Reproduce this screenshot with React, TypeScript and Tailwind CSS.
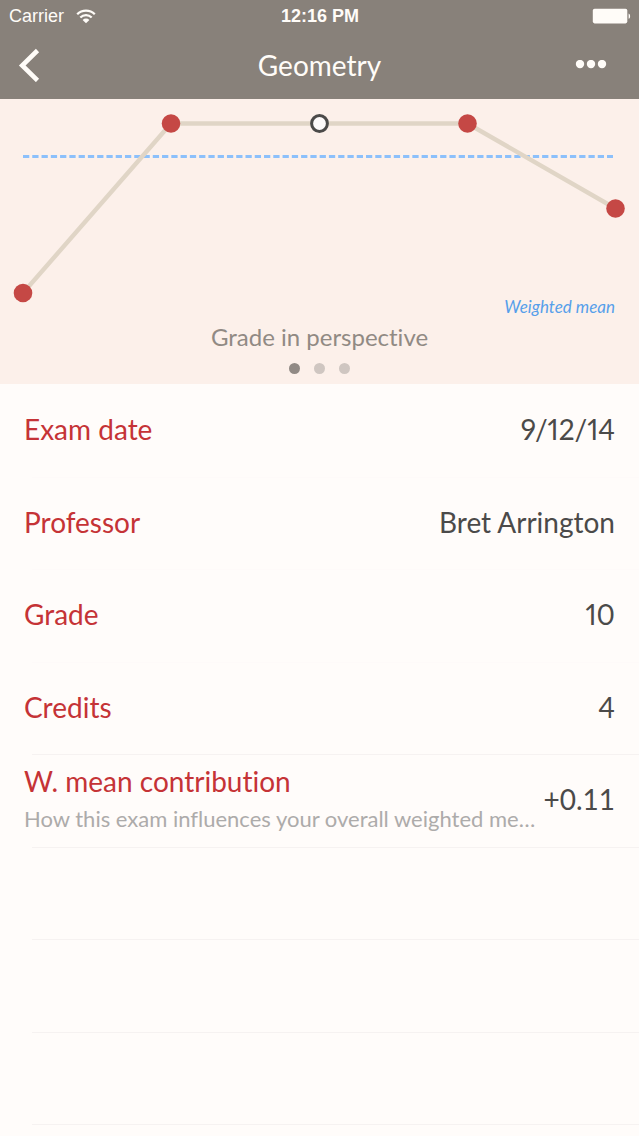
import { useState } from 'react'
import type { ReactNode } from 'react'
import { clsx } from 'clsx'

type Point = { x: number; y: number; current?: boolean }

const POINTS: Point[] = [
  { x: 23, y: 194 },
  { x: 171, y: 24.5 },
  { x: 319.5, y: 24.5, current: true },
  { x: 467.5, y: 24.5 },
  { x: 615.5, y: 109.5 },
]
const MEAN_Y = 57.5

const PAGES = ['Grade in perspective', 'Grade distribution', 'Grade trend']

const DETAILS = [
  { label: 'Exam date', value: '9/12/14' },
  { label: 'Professor', value: 'Bret Arrington' },
  { label: 'Grade', value: '10' },
  { label: 'Credits', value: '4' },
]

function StatusBar() {
  return (
    <div className="grid h-8 grid-cols-3 items-center pr-2 pl-[9px] font-['Liberation_Sans',sans-serif] text-lg leading-8">
      <div className="flex items-center gap-3">
        <span>Carrier</span>
        <svg width="20" height="15" viewBox="0 0 20 15" fill="none">
          <path d="M1.2 5.2a12.6 12.6 0 0 1 17.6 0" stroke="currentColor" strokeWidth="2.3" />
          <path d="M4.3 8.5a8.2 8.2 0 0 1 11.4 0" stroke="currentColor" strokeWidth="2.3" />
          <path d="M6.6 10.9a4.9 4.9 0 0 1 6.8 0L10 14.2z" fill="currentColor" />
        </svg>
      </div>
      <span className="text-center font-bold">12:16 PM</span>
      <svg className="justify-self-end" width="39" height="16" viewBox="0 0 39 16" fill="currentColor">
        <rect x="0.8" y="0.8" width="34.5" height="14.6" rx="1.8" />
        <path d="M36.6 5.4c2 .6 2 4.8 0 5.4z" />
      </svg>
    </div>
  )
}

function NavBar() {
  return (
    <div className="flex h-[67px] items-center justify-between pr-8 pb-0.5 pl-4">
      <button type="button" aria-label="Back" className="flex w-16 cursor-pointer">
        <svg width="24" height="34" viewBox="0 0 24 34" fill="none">
          <path d="M21.5 2.5L6.2 17.5l15.3 15" stroke="currentColor" strokeWidth="4.6" />
        </svg>
      </button>
      <h1 className="text-[28px] leading-9">Geometry</h1>
      <button type="button" aria-label="More" className="flex w-12 cursor-pointer justify-end">
        <svg width="32" height="10" viewBox="0 0 32 10" fill="currentColor">
          <circle cx="5" cy="4" r="4.2" />
          <circle cx="16" cy="4" r="4.2" />
          <circle cx="27" cy="4" r="4.2" />
        </svg>
      </button>
    </div>
  )
}

function GradeChart() {
  return (
    <svg className="h-auto w-full" viewBox="0 0 639 204" fill="none" role="img" aria-label="Grades">
      <line
        x1="23"
        x2="613"
        y1={MEAN_Y}
        y2={MEAN_Y}
        stroke="#8cc0fb"
        strokeWidth="3"
        strokeDasharray="6.27 3"
      />
      <polyline
        points={POINTS.map((p) => `${p.x},${p.y}`).join(' ')}
        stroke="#e0d5c6"
        strokeWidth="4.4"
      />
      {POINTS.map((p) =>
        p.current ? (
          <circle key={p.x} cx={p.x} cy={p.y} r="7.9" fill="#fdfafa" stroke="#4b4a49" strokeWidth="3" />
        ) : (
          <circle key={p.x} cx={p.x} cy={p.y} r="9.3" fill="#c54845" />
        ),
      )}
    </svg>
  )
}

function Row({ children, divider }: { children?: ReactNode; divider?: boolean }) {
  return (
    <div className="relative flex items-center justify-between px-6 pb-0.5">
      {children}
      <div
        className={clsx(
          'absolute right-0 -bottom-px left-8 border-b',
          divider ? 'border-[#f6f2f1]' : 'border-[#fefaf9]',
        )}
      />
    </div>
  )
}

export default function App() {
  const [page, setPage] = useState(0)

  return (
    <div className="flex min-h-screen flex-col overflow-hidden bg-[#fffcfa] font-[Lato,sans-serif] [font-variant-ligatures:no-common-ligatures]">
      <header className="bg-[#88817a] text-[#fffcf8]">
        <StatusBar />
        <NavBar />
      </header>

      <section className="bg-[#fcf0ea] pb-[10px]">
        <GradeChart />
        <p className="-mt-1.5 px-6 text-right text-[17px] leading-5 text-[#569fea] italic">Weighted mean</p>
        <h2 className="mt-0.5 text-center text-2xl leading-9 text-[#918a84]">{PAGES[page]}</h2>
        <div className="mt-2 flex justify-center gap-[14px]">
          {PAGES.map((title, i) => (
            <button
              key={title}
              type="button"
              aria-label={title}
              onClick={() => setPage(i)}
              className={clsx(
                'size-[11px] cursor-pointer rounded-full',
                i === page ? 'bg-[#918a85]' : 'bg-[#cfc6c1]',
              )}
            />
          ))}
        </div>
      </section>

      <div className="grid min-h-[740px] auto-rows-fr">
        <dl className="contents text-[28px] leading-9">
          {DETAILS.map((d) => (
            <Row key={d.label} divider={d.label === 'Credits'}>
              <dt className="text-[#c53336]">{d.label}</dt>
              <dd className="text-[#4b4a49] proportional-nums">{d.value}</dd>
            </Row>
          ))}
          <Row divider>
            <dt className="min-w-0 pt-1 text-[#c53336]">
              W. mean contribution
              <p className="truncate text-[22px] leading-10 text-[#adabaa]">
                How this exam influences your overall weighted me…
              </p>
            </dt>
            <dd className="shrink-0 text-[#4b4a49]">+0.11</dd>
          </Row>
        </dl>
        <Row divider />
        <Row divider />
        <Row divider />
      </div>
    </div>
  )
}
